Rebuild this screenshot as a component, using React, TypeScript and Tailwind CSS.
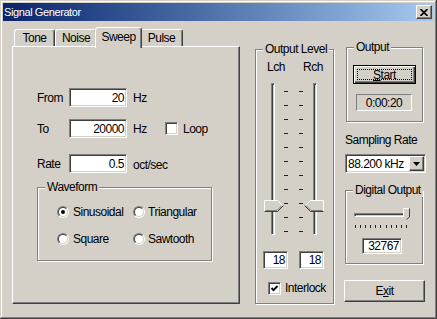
import React from "react";

const raised =
  "border border-t-white border-l-white border-r-[#404040] border-b-[#404040] shadow-[inset_-1px_-1px_#808080]";
const sunken =
  "border border-t-[#808080] border-l-[#808080] border-r-white border-b-white shadow-[inset_1px_1px_#404040,inset_-1px_-1px_#d4d0c8]";

function Group({ label, className, children }: { label: string; className?: string; children?: React.ReactNode }) {
  return (
    <div className={`relative border border-[#808080] shadow-[inset_1px_1px_#fff,1px_1px_#fff] ${className ?? ""}`}>
      <span className="absolute -top-[8px] left-[7px] px-[2px] bg-[#d4d0c8] whitespace-nowrap">{label}</span>
      {children}
    </div>
  );
}

function Field({ children, className }: { children: React.ReactNode; className?: string }) {
  return (
    <div className={`${sunken} bg-white flex items-center justify-end pr-[2px] ${className ?? ""}`}>{children}</div>
  );
}

function Check({ checked }: { checked?: boolean }) {
  return (
    <div className={`${sunken} w-[13px] h-[13px] bg-white flex items-center justify-center shrink-0`}>
      {checked && (
        <svg width="9" height="9" viewBox="0 0 9 9">
          <polyline points="1.5,4 3.5,6.2 7.5,2" fill="none" stroke="#000" strokeWidth="1.9" />
        </svg>
      )}
    </div>
  );
}

function Radio({ checked }: { checked?: boolean }) {
  return (
    <div className="w-[12px] h-[12px] shrink-0 rounded-full border border-t-[#808080] border-l-[#808080] border-r-white border-b-white">
      <div className="w-full h-full rounded-full border border-t-[#404040] border-l-[#404040] border-r-[#d4d0c8] border-b-[#d4d0c8] bg-white flex items-center justify-center">
        {checked && <div className="w-[4px] h-[4px] rounded-full bg-black" />}
      </div>
    </div>
  );
}

function Tab({ label, width, selected }: { label: string; width: string; selected?: boolean }) {
  return (
    <div
      className={`${width} ${
        selected ? "h-[21px] -mb-[2px] -mx-[2px] relative z-10 pb-[3px]" : "h-[17px]"
      } bg-[#d4d0c8] rounded-t-[3px] border-t border-l border-r border-t-white border-l-white border-r-[#404040] shadow-[inset_-1px_0_#808080] flex items-center justify-center`}
    >
      {label}
    </div>
  );
}

function VThumb({ flip }: { flip?: boolean }) {
  return (
    <svg width="20" height="12" viewBox="0 0 20 12" className={flip ? "-scale-x-100" : ""}>
      <polygon points="0.5,0.5 13.5,0.5 19,6 13.5,11.5 0.5,11.5" fill="#d4d0c8" />
      <path d="M0.5 11.5V0.5H13.5L19 6" fill="none" stroke="#fff" />
      <path d="M0.5 11.5H13.5L19.5 5.5" fill="none" stroke="#404040" />
      <path d="M1.5 10.5H13L18 5.5" fill="none" stroke="#808080" />
    </svg>
  );
}

function Ticks() {
  return (
    <div className="w-[4px] h-full flex flex-col justify-between pt-[8px] pb-[3px]">
      {Array.from({ length: 11 }).map((_, i) => (
        <div key={i} className="h-[1px] w-full bg-[#202020]" />
      ))}
    </div>
  );
}

function Track() {
  return (
    <div className="w-[4px] h-full border border-t-[#808080] border-l-[#808080] border-r-white border-b-white shadow-[inset_1px_1px_#404040]" />
  );
}

export default function App() {
  return (
    <div className="w-[437px] h-[319px] bg-[#d4d0c8] p-[3px] overflow-hidden shadow-[inset_-1px_-1px_#404040,inset_1px_1px_#d4d0c8,inset_-2px_-2px_#808080,inset_2px_2px_#fff] font-['Liberation_Sans',Arial,sans-serif] text-[12px] leading-[14px] tracking-[-0.5px] text-black">
      {/* title bar */}
      <div className="h-[18px] bg-linear-to-r from-[#0a246a] to-[#a6caf0] flex items-center justify-between pl-[1px] pr-[2px]">
        <span className="text-white text-[11px] tracking-[-0.4px]">Signal Generator</span>
        <div className={`${raised} bg-[#d4d0c8] w-[16px] h-[14px] flex items-center justify-center`}>
          <svg width="8" height="7" viewBox="0 0 8 7">
            <path d="M0.5 0L7.5 7M7.5 0L0.5 7" stroke="#000" strokeWidth="1.6" />
          </svg>
        </div>
      </div>

      <div className="flex items-start">
        {/* tabs */}
        <div className="ml-[9px] mt-[6px] flex flex-col">
          <div className="flex items-end h-[19px] pl-[2px]">
            <Tab label="Tone" width="w-[41px]" />
            <Tab label="Noise" width="w-[42px]" />
            <Tab label="Sweep" width="w-[47px]" selected />
            <Tab label="Pulse" width="w-[43px]" />
          </div>
          <div className="w-[228px] h-[258px] border border-t-white border-l-white border-r-[#404040] border-b-[#404040] shadow-[inset_-1px_-1px_#808080] pt-[41px] pl-[24px]">
            <div className="flex items-center h-[19px]">
              <span className="w-[32px]">From</span>
              <Field className="w-[58px] h-[19px]">20</Field>
              <span className="ml-[6px]">Hz</span>
            </div>
            <div className="flex items-center h-[19px] mt-[12px]">
              <span className="w-[32px]">To</span>
              <Field className="w-[58px] h-[19px]">20000</Field>
              <span className="ml-[6px] w-[32px]">Hz</span>
              <Check />
              <span className="ml-[5px]">Loop</span>
            </div>
            <div className="flex items-center h-[19px] mt-[16px]">
              <span className="w-[32px]">Rate</span>
              <Field className="w-[58px] h-[19px]">0.5</Field>
              <span className="ml-[6px] mt-[3px]">oct/sec</span>
            </div>
            <Group label="Waveform" className="mt-[14px] w-[175px] h-[74px] pt-[18px] pl-[19px]">
              <div className="flex items-center h-[12px]">
                <div className="w-[76px] flex items-center">
                  <Radio checked />
                  <span className="ml-[4px]">Sinusoidal</span>
                </div>
                <Radio />
                <span className="ml-[3px]">Triangular</span>
              </div>
              <div className="flex items-center h-[12px] mt-[15px]">
                <div className="w-[76px] flex items-center">
                  <Radio />
                  <span className="ml-[4px]">Square</span>
                </div>
                <Radio />
                <span className="ml-[3px]">Sawtooth</span>
              </div>
            </Group>
          </div>
        </div>

        {/* output level */}
        <Group label="Output Level" className="ml-[15px] mt-[28px] w-[79px] h-[255px] pt-[10px]">
          <div className="flex pl-[11px]">
            <span className="w-[36px]">Lch</span>
            <span>Rch</span>
          </div>
          <div className="relative h-[152px] mt-[9px] flex pl-[15px]">
            <Track />
            <div className="ml-[9px] h-full">
              <Ticks />
            </div>
            <div className="ml-[11px] h-full">
              <Ticks />
            </div>
            <div className="ml-[10px] h-full">
              <Track />
            </div>
            <div className="absolute left-[8px] top-[117px] flex">
              <VThumb />
            </div>
            <div className="absolute left-[48px] top-[117px] flex">
              <VThumb flip />
            </div>
          </div>
          <div className="flex mt-[16px] pl-[7px]">
            <Field className="w-[25px] h-[18px] pr-[1px]">18</Field>
            <Field className="w-[25px] h-[18px] pr-[1px] ml-[11px]">18</Field>
          </div>
          <div className="flex items-center mt-[12px] pl-[12px]">
            <Check checked />
            <span className="ml-[4px]">Interlock</span>
          </div>
        </Group>

        {/* right column */}
        <div className="ml-[10px] flex flex-col">
          <Group label="Output" className="ml-[2px] mt-[26px] w-[77px] h-[75px] pt-[17px]">
            <div className="ml-[6px] w-[63px] h-[19px] border border-black shadow-[inset_1px_1px_#fff,inset_-1px_-1px_#404040,inset_-2px_-2px_#808080] p-[3px]">
              <div className="w-full h-full border border-dotted border-black flex items-center justify-center">
                <span>
                  <span className="underline">S</span>tart
                </span>
              </div>
            </div>
            <div className="ml-[9px] mt-[10px] w-[56px] h-[17px] border border-t-[#808080] border-l-[#808080] border-r-white border-b-white flex items-center justify-center">
              0:00:20
            </div>
          </Group>
          <span className="ml-[1px] mt-[11px]">Sampling Rate</span>
          <div className={`${sunken} ml-[1px] mt-[7px] w-[81px] h-[19px] bg-white flex items-center justify-between pl-[2px] pr-[1px]`}>
            <span>88.200 kHz</span>
            <div className={`${raised} bg-[#d4d0c8] w-[15px] h-[15px] flex items-center justify-center`}>
              <svg width="7" height="4" viewBox="0 0 7 4">
                <polygon points="0,0 7,0 3.5,4" fill="#000" />
              </svg>
            </div>
          </div>
          <Group label="Digital Output" className="ml-[1px] mt-[17px] w-[78px] h-[74px] pt-[17px]">
            <div className="relative ml-[8px] w-[57px] h-[20px] pt-[5px]">
              <div className="w-[54px] h-[4px] border border-t-[#808080] border-l-[#808080] border-r-white border-b-white shadow-[inset_1px_1px_#404040]" />
              <div className="mt-[8px] w-[53px] flex justify-between pl-[1px]">
                {Array.from({ length: 11 }).map((_, i) => (
                  <div key={i} className="w-[1px] h-[3px] bg-[#202020]" />
                ))}
              </div>
              <svg width="7" height="12" viewBox="0 0 7 12" className="absolute left-[49px] top-0">
                <polygon points="0.5,0.5 6.5,0.5 6.5,9 3.5,11.5 0.5,9" fill="#d4d0c8" />
                <path d="M0.5 9V0.5H6.5" fill="none" stroke="#fff" />
                <path d="M6.5 0.5V9L3.5 11.5" fill="none" stroke="#404040" />
              </svg>
            </div>
            <Field className="ml-[16px] mt-[10px] w-[40px] h-[16px] pr-[1px]">32767</Field>
          </Group>
          <div className={`${raised} mt-[16px] w-[81px] h-[22px] flex items-center justify-center`}>
            <span>
              E<span className="underline">x</span>it
            </span>
          </div>
        </div>
      </div>
    </div>
  );
}
